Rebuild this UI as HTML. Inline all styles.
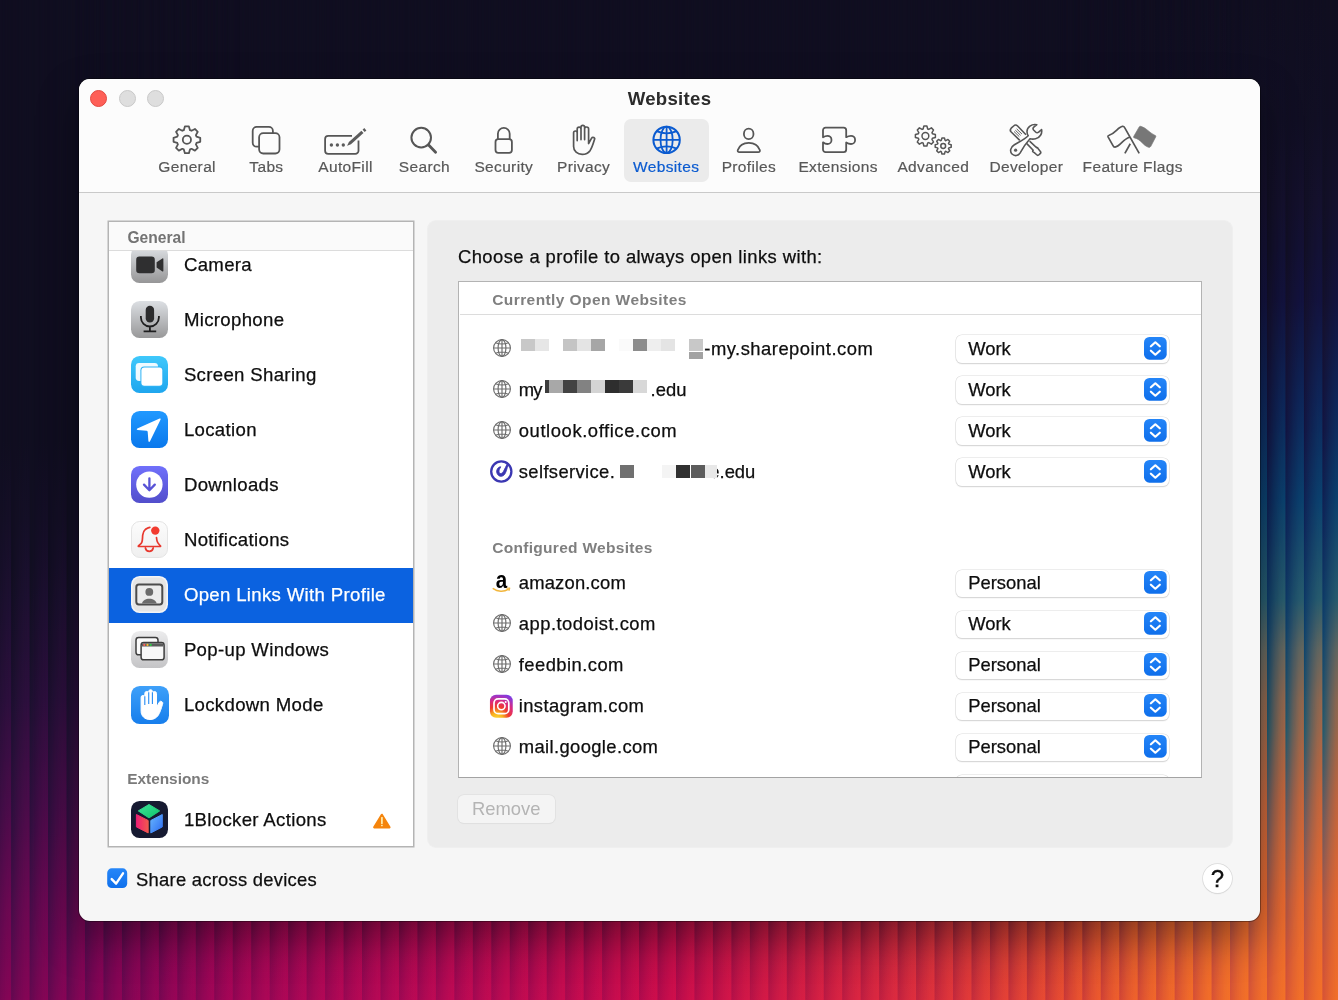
<!DOCTYPE html>
<html lang="en">
<head>
<meta charset="utf-8">
<title>Websites</title>
<style>
*{box-sizing:border-box;margin:0;padding:0}
html,body{width:1338px;height:1000px;overflow:hidden}
body{font-family:"Liberation Sans",sans-serif;color:#1d1d1f;position:relative;background:#100e20}
.abs{position:absolute}
/*WALL*/
#wall,#wallB,.wl{position:absolute;left:0;top:0;width:1338px;height:1000px;overflow:hidden}
#wa{position:absolute;left:0;top:0;width:1338px;height:1000px;background:linear-gradient(180deg,rgba(16,14,32,1) 0px,rgba(16,14,32,1) 560px,rgba(16,14,32,0.82) 700px,rgba(16,14,32,0.5) 800px,rgba(16,14,32,0.24) 870px,rgba(16,14,32,0.08) 930px,rgba(16,14,32,0) 1000px),linear-gradient(90deg,#8c0456 0px,#a80658 200px,#c00a54 450px,#d00e4c 670px,#de2a40 890px,#ea4c32 1050px,#f26a2a 1220px,#f47628 1338px)}
#wb{position:absolute;left:0;top:0;width:1338px;height:1000px;background:linear-gradient(180deg,rgba(16,14,32,1) 85px,rgba(16,14,32,1) 645px,rgba(16,14,32,0.82) 785px,rgba(16,14,32,0.5) 885px,rgba(16,14,32,0.24) 955px,rgba(16,14,32,0.08) 1015px,rgba(16,14,32,0) 1085px),linear-gradient(90deg,#800456 0px,#9c065a 200px,#b2085a 450px,#c40a52 670px,#d42244 890px,#e03c3c 1050px,#f05038 1220px,#f55a36 1338px)}
#la{position:absolute;left:0;top:0;width:340px;height:1000px;background:linear-gradient(180deg,#100e20 0px,#100e20 440px,#150f27 520px,#1e1032 600px,#2e0f3e 700px,#4a0c4a 800px,#6c0852 900px,#880556 1000px,#98055a 1130px);-webkit-mask-image:linear-gradient(90deg,#000 70px,rgba(0,0,0,0) 240px);mask-image:linear-gradient(90deg,#000 70px,rgba(0,0,0,0) 240px)}
#lb{position:absolute;left:0;top:0;width:340px;height:1000px;background:linear-gradient(180deg,#100e20 130px,#100e20 570px,#150f27 650px,#1e1032 730px,#2e0f3e 830px,#4a0c4a 930px,#6c0852 1030px,#880556 1130px,#98055a 1260px);-webkit-mask-image:linear-gradient(90deg,#000 70px,rgba(0,0,0,0) 240px);mask-image:linear-gradient(90deg,#000 70px,rgba(0,0,0,0) 240px)}
#ra{position:absolute;left:1060px;top:0;width:278px;height:1000px;background:linear-gradient(180deg,#100e20 0px,#110f24 120px,#15112e 200px,#131340 300px,#0e285c 400px,#0b4370 500px,#2a5e6e 600px,#6a695e 650px,#96694e 700px,#ca663a 800px,#ea6a2e 900px,#f47228 1000px,#f47628 1130px);-webkit-mask-image:linear-gradient(270deg,#000 90px,rgba(0,0,0,0) 278px);mask-image:linear-gradient(270deg,#000 90px,rgba(0,0,0,0) 278px)}
#rb{position:absolute;left:1060px;top:0;width:278px;height:1000px;background:linear-gradient(180deg,#100e20 0px,#110f24 250px,#15112e 330px,#131340 430px,#0e2559 530px,#0b3f6c 630px,#1b5970 730px,#6e5a5e 830px,#a85548 900px,#c8503c 960px,#d65237 1000px,#e05a34 1130px);-webkit-mask-image:linear-gradient(270deg,#000 90px,rgba(0,0,0,0) 278px);mask-image:linear-gradient(270deg,#000 90px,rgba(0,0,0,0) 278px)}
#wallB{-webkit-mask-image:linear-gradient(90deg,#000 0,rgba(0,0,0,.8) 14%,rgba(0,0,0,.45) 40%,rgba(0,0,0,.14) 72%,rgba(0,0,0,0) 100%);mask-image:linear-gradient(90deg,#000 0,rgba(0,0,0,.8) 14%,rgba(0,0,0,.45) 40%,rgba(0,0,0,.14) 72%,rgba(0,0,0,0) 100%);-webkit-mask-size:18.48px 100%;mask-size:18.48px 100%;-webkit-mask-repeat:repeat;mask-repeat:repeat;-webkit-mask-position:11.1px 0;mask-position:11.1px 0;}
/*ENDWALL*/
#win{position:absolute;left:79px;top:79px;width:1181px;height:842px;border-radius:11px;background:#f6f6f6;overflow:hidden;will-change:transform;
box-shadow:0 0 0 1px rgba(0,0,0,.35),0 18px 40px rgba(0,0,0,.35)}
#tbar{position:absolute;left:0;top:0;width:1181px;height:114px;background:#fcfcfc;border-bottom:1.4px solid #c9c9c9}
.tl{position:absolute;top:11px;width:17px;height:17px;border-radius:50%;border:1px solid #c8c8c8;background:#dedede}
#title{position:absolute;left:0;width:1181px;top:9px;text-align:center;font-weight:bold;font-size:18.6px;letter-spacing:.3px;color:#2b2b2b}
/*TB*/
.tl2{position:absolute;top:79px;width:120px;text-align:center;font-size:15.5px;line-height:18px;letter-spacing:.35px;color:#585858;white-space:nowrap;-webkit-text-stroke:.2px}.tl2.sel{color:#0b5bd0}
/*ENDTB*/
/*SB*/
#sbw{position:absolute;left:30px;top:143px;width:303.500px;height:623.700px;box-shadow:0 0 0 1.500px #b4b4b4;background:#fff}
#sb{position:absolute;left:0;top:0;width:100%;height:100%;overflow:hidden}
.shead{position:absolute;left:0;top:0;width:100%;height:29.300px;background:#fafafa;border-bottom:1px solid #dcdcdc;padding:6.600px 0 0 18.400px;font-weight:bold;font-size:15.600px;line-height:18px;color:#737373}
.shead2{position:absolute;left:18.200px;font-weight:bold;font-size:15.400px;line-height:18px;color:#7a7a7a}
.srow{position:absolute;left:0;width:100%;height:55px;font-size:18.600px;letter-spacing:.33px;color:#0e0e0e;-webkit-text-stroke:.25px;white-space:nowrap}
.srow.sel{background:#0b62e0;color:#fff}
.srow .ico{position:absolute;left:21.700px;top:7.900px}
.srow span{position:absolute;left:74.900px;top:16.300px;line-height:22px}
/*ENDSB*/
/*PN*/
#pnl{position:absolute;left:349px;top:141.500px;width:804px;height:626px;border-radius:8px;background:#ececec;box-shadow:0 0 0 1px #efefef}
.hd{font-size:18.400px;line-height:22px;letter-spacing:.42px;color:#0e0e0e;-webkit-text-stroke:.25px;white-space:nowrap}
#tbl{position:absolute;left:379px;top:202.500px;width:743px;height:496px;background:#fff}
#tblf{position:absolute;left:378.500px;top:202px;width:744px;height:497px;border:1.500px solid #b3b3b3;border-bottom-color:#a3a3a3;pointer-events:none}
.th{font-weight:bold;font-size:15.500px;line-height:18px;letter-spacing:.42px;color:#7f7f7f;white-space:nowrap}
.rt{position:absolute;font-size:18.400px;line-height:22px;letter-spacing:.48px;color:#0e0e0e;-webkit-text-stroke:.25px;white-space:nowrap}
.px{position:absolute;display:block}
.pop{position:absolute;left:876.900px;width:213px;height:27.900px;margin-top:1.100px;border-radius:6px;background:#fff;box-shadow:0 0 0 .6px #dcdcdc,0 1px 1.200px rgba(0,0,0,.2)}
.pop span{position:absolute;left:12.300px;top:2.500px;font-size:18.400px;line-height:22px;color:#0e0e0e;-webkit-text-stroke:.25px;white-space:nowrap}
#rm{position:absolute;left:378.500px;top:715.700px;width:97.500px;height:28.500px;border-radius:6px;background:#f4f4f4;box-shadow:0 0 0 .8px #e0e0e0,0 1px 1px rgba(0,0,0,.06);text-align:center;font-size:18.400px;line-height:22px;padding-top:3.600px;color:#b4b4b4}
.ft{font-size:18.400px;line-height:22px;letter-spacing:.25px;color:#0e0e0e;-webkit-text-stroke:.25px;white-space:nowrap}
#help{position:absolute;left:1123.800px;top:784.800px;width:29.400px;height:29.400px;border-radius:50%;background:#fff;box-shadow:0 0 0 .7px #d9d9d9,0 .8px 1.200px rgba(0,0,0,.16);text-align:center;font-size:24px;line-height:30.500px;color:#111;-webkit-text-stroke:.35px}
/*ENDPN*/
</style>
</head>
<body>
<!--WALL--><div id="wall"><div id="wa"></div><div id="la"></div><div id="ra"></div></div><div id="wallB"><div id="wb"></div><div id="lb"></div><div id="rb"></div></div><!--ENDWALL-->
<div id="win">
  <div id="tbar">
    <div class="tl" style="left:11.400px;background:#fe5f57;border-color:#e24840"></div>
    <div class="tl" style="left:39.700px"></div>
    <div class="tl" style="left:68px"></div>
    <div id="title">Websites</div>
    <!--TOOLBAR--><div class="abs" style="left:545px;top:39.5px;width:84.5px;height:63px;border-radius:7px;background:#ebebeb"></div><svg class="abs" style="left:0;top:0" width="1181" height="113" viewBox="79 79 1181 113" fill="none" stroke="#565656"><path d="M183.80 130.19 L184.90 126.45 L188.90 126.45 L190.00 130.19 A10.10 10.10 0 0 1 191.51 130.81 L194.93 128.95 L197.75 131.77 L195.89 135.19 A10.10 10.10 0 0 1 196.51 136.70 L200.25 137.80 L200.25 141.80 L196.51 142.90 A10.10 10.10 0 0 1 195.89 144.41 L197.75 147.83 L194.93 150.65 L191.51 148.79 A10.10 10.10 0 0 1 190.00 149.41 L188.90 153.15 L184.90 153.15 L183.80 149.41 A10.10 10.10 0 0 1 182.29 148.79 L178.87 150.65 L176.05 147.83 L177.91 144.41 A10.10 10.10 0 0 1 177.29 142.90 L173.55 141.80 L173.55 137.80 L177.29 136.70 A10.10 10.10 0 0 1 177.91 135.19 L176.05 131.77 L178.87 128.95 L182.29 130.81 A10.10 10.10 0 0 1 183.80 130.19 Z" stroke-width="1.8" stroke-linejoin="round"/><circle cx="186.9" cy="139.8" r="4.1" stroke-width="1.8"/><path d="M272.9 133.1V130.9a4 4 0 0 0-4-4H256.7a4 4 0 0 0-4 4V142.7a4 4 0 0 0 4 4H259.1" stroke-width="1.8"/><rect x="259.1" y="133.1" width="20.4" height="20.4" rx="4.2" stroke-width="1.8"/><path d="M352 135.9H328.3a3.2 3.2 0 0 0-3.2 3.2V150.7a3.2 3.2 0 0 0 3.2 3.2H355.3a3.2 3.2 0 0 0 3.2-3.2V140.4" stroke-width="1.8"/><circle cx="331.4" cy="145" r="1.7" fill="#5c5c5c" stroke="none"/><circle cx="337.4" cy="145" r="1.7" fill="#5c5c5c" stroke="none"/><circle cx="343.3" cy="145" r="1.7" fill="#5c5c5c" stroke="none"/><path d="M347.1 145.8L348.9 141.9L361.4 130.8L363.5 133.1L351 144.3Z" fill="#5c5c5c" stroke="none"/><path d="M362.6 129.7L364.3 128.1L366.4 130.4L364.7 132Z" fill="#5c5c5c" stroke="none"/><circle cx="421.2" cy="137.6" r="9.8" stroke-width="2"/><path d="M428.6 145L435.6 152.2" stroke-width="2.8" stroke-linecap="round"/><rect x="495.5" y="139.1" width="16.4" height="13.8" rx="2.8" stroke-width="1.8"/><path d="M497.9 139V133.8a5.9 5.9 0 0 1 11.8 0V139" stroke-width="1.8"/><path d="M 577.20 140.60 V 132.80 A 1.80 1.80 0 0 0 573.60 132.80 V 146.40 C 573.60 151.20 577.40 154.40 582.20 154.40 C 585.40 154.40 588.20 153.20 590.20 150.40 C 591.80 148.00 593.00 144.40 594.40 139.80 A 1.52 1.52 0 0 0 591.60 138.20 L 588.60 143.60 V 129.00 A 2.00 2.00 0 0 0 584.60 129.00 V 139.60 M 584.60 129.00 V 127.20 A 1.80 1.80 0 0 0 581.00 127.20 V 139.60 M 581.00 129.00 A 1.90 1.90 0 0 0 577.20 129.00 V 133.20" stroke-width="1.7" stroke-linecap="round" stroke-linejoin="round"/><g stroke="#0b5bd0"><circle cx="666.6" cy="139.9" r="13.2" stroke-width="2"/><ellipse cx="666.6" cy="139.9" rx="6.1" ry="13.2" stroke-width="1.8"/><path d="M666.6 126.7V153.1M653.4 139.9H679.8" stroke-width="1.8"/><path d="M656.5 131.2Q666.6 135.6 676.7 131.2M656.5 148.6Q666.6 144.2 676.7 148.6" stroke-width="1.8"/></g><ellipse cx="748.7" cy="133.9" rx="4.8" ry="5.2" stroke-width="1.8"/><path d="M739.4 152.1H758.2Q760.4 152.1 759.8 150C758.3 145.8 754 142.9 748.8 142.9C743.6 142.9 739.3 145.8 737.8 150Q737.2 152.1 739.4 152.1Z" stroke-width="1.8" stroke-linejoin="round"/><path d="M 823.00 137.20 V 130.20 A 2.60 2.60 0 0 1 825.60 127.60 H 843.60 A 2.60 2.60 0 0 1 846.20 130.20 V 137.20 C 847.60 136.32 849.20 135.80 851.00 135.80 A 4.08 4.08 0 0 1 851.00 144.00 C 849.20 144.00 847.60 143.40 846.20 142.48 V 149.60 A 2.60 2.60 0 0 1 843.60 152.20 H 825.60 A 2.60 2.60 0 0 1 823.00 149.60 V 142.28 C 824.40 143.40 826.00 144.00 827.40 144.00 A 4.08 4.08 0 0 0 827.40 135.80 C 826.00 135.80 824.40 136.32 823.00 137.20 Z" stroke-width="1.8" stroke-linejoin="round"/><path d="M923.10 128.97 L923.90 126.01 L926.90 126.01 L927.70 128.97 A7.40 7.40 0 0 1 928.75 129.40 L931.40 127.88 L933.52 130.00 L932.00 132.65 A7.40 7.40 0 0 1 932.43 133.70 L935.39 134.50 L935.39 137.50 L932.43 138.30 A7.40 7.40 0 0 1 932.00 139.35 L933.52 142.00 L931.40 144.12 L928.75 142.60 A7.40 7.40 0 0 1 927.70 143.03 L926.90 145.99 L923.90 145.99 L923.10 143.03 A7.40 7.40 0 0 1 922.05 142.60 L919.40 144.12 L917.28 142.00 L918.80 139.35 A7.40 7.40 0 0 1 918.37 138.30 L915.41 137.50 L915.41 134.50 L918.37 133.70 A7.40 7.40 0 0 1 918.80 132.65 L917.28 130.00 L919.40 127.88 L922.05 129.40 A7.40 7.40 0 0 1 923.10 128.97 Z" stroke-width="1.5" stroke-linejoin="round"/><circle cx="925.4" cy="136" r="3.4" stroke-width="1.5"/><path d="M941.30 140.41 L941.95 138.00 L944.45 138.00 L945.10 140.41 A5.90 5.90 0 0 1 945.81 140.71 L947.98 139.46 L949.74 141.22 L948.49 143.39 A5.90 5.90 0 0 1 948.79 144.10 L951.20 144.75 L951.20 147.25 L948.79 147.90 A5.90 5.90 0 0 1 948.49 148.61 L949.74 150.78 L947.98 152.54 L945.81 151.29 A5.90 5.90 0 0 1 945.10 151.59 L944.45 154.00 L941.95 154.00 L941.30 151.59 A5.90 5.90 0 0 1 940.59 151.29 L938.42 152.54 L936.66 150.78 L937.91 148.61 A5.90 5.90 0 0 1 937.61 147.90 L935.20 147.25 L935.20 144.75 L937.61 144.10 A5.90 5.90 0 0 1 937.91 143.39 L936.66 141.22 L938.42 139.46 L940.59 140.71 A5.90 5.90 0 0 1 941.30 140.41 Z" stroke-width="1.5" stroke-linejoin="round"/><circle cx="943.2" cy="146" r="2.4" stroke-width="1.5"/><path d="M 1036.80 124.72 C 1031.60 123.60 1027.00 127.20 1027.00 131.60 C 1027.00 133.20 1027.40 134.60 1028.20 135.80 C 1024.00 140.00 1018.00 142.40 1014.00 145.00 C 1010.40 147.20 1009.60 151.60 1012.00 154.00 C 1014.40 156.40 1018.40 156.00 1020.00 153.20 C 1022.80 148.00 1026.00 143.20 1030.00 138.80 C 1032.00 139.28 1034.00 139.20 1035.60 138.80 C 1040.00 137.60 1042.40 133.60 1041.60 129.60 L 1038.60 132.20 C 1037.60 133.00 1036.40 132.80 1035.60 132.00 L 1033.60 130.00 C 1032.80 129.00 1032.88 128.00 1033.80 127.20 L 1036.80 124.72 Z" stroke-width="1.6" stroke-linejoin="round"/><circle cx="1015.60" cy="150.20" r="1.6" fill="#5c5c5c" stroke="none"/><path d="M 1026.00 134.80 L 1017.60 126.00 Q 1015.60 124.00 1013.60 126.00 L 1011.20 128.20 Q 1009.40 130.00 1011.20 132.00 L 1019.80 140.40" stroke-width="1.6" stroke-linejoin="round"/><path d="M 1014.00 131.48 L 1019.32 136.68 M 1015.32 130.16 L 1020.64 135.36 M 1016.64 128.84 L 1021.96 134.04" stroke-width=".95"/><path d="M 1026.80 143.60 L 1033.20 150.20 C 1032.20 151.00 1032.60 152.00 1034.00 152.40 L 1037.00 155.00 Q 1038.00 155.80 1039.00 154.80 L 1040.40 153.40 Q 1041.20 152.40 1040.40 151.40 L 1038.00 148.60 C 1037.80 147.60 1037.20 147.20 1036.60 147.60 L 1029.60 141.20" stroke-width="1.6" stroke-linejoin="round"/><path d="M 1129.35 137.28 C 1123.08 139.08 1119.94 146.70 1115.00 147.15 Q 1113.43 147.15 1112.99 145.58 L 1108.05 136.83 Q 1107.61 135.71 1109.17 135.26 C 1115.45 133.25 1118.14 126.97 1122.40 126.30 Q 1123.97 126.07 1124.65 127.64 L 1139.22 153.43" stroke-width="1.7" stroke-linejoin="round"/><path d="M 1130.25 143.78 L 1124.87 153.43" stroke-width="1.7"/><path d="M 1140.79 126.30 Q 1139.67 125.85 1139.00 127.19 L 1133.61 136.61 Q 1133.17 137.73 1134.51 137.96 C 1140.57 139.08 1143.26 145.80 1148.64 147.37 Q 1150.21 147.60 1150.88 146.25 L 1155.81 136.83 Q 1156.26 135.71 1154.91 135.26 C 1149.09 132.80 1146.84 127.87 1140.79 126.30 Z" fill="#777" stroke="#777" stroke-width="0.6" stroke-linejoin="round"/></svg><div class="tl2" style="left:48.1px">General</div><div class="tl2" style="left:127.4px">Tabs</div><div class="tl2" style="left:206.5px">AutoFill</div><div class="tl2" style="left:285.4px">Search</div><div class="tl2" style="left:364.8px">Security</div><div class="tl2" style="left:444.6px">Privacy</div><div class="tl2 sel" style="left:527.2px">Websites</div><div class="tl2" style="left:609.9px">Profiles</div><div class="tl2" style="left:699.1px">Extensions</div><div class="tl2" style="left:794.3px">Advanced</div><div class="tl2" style="left:887.3px">Developer</div><div class="tl2" style="left:993.7px">Feature Flags</div><!--ENDTOOLBAR-->
  </div>
  <!--SIDEBAR--><div id="sbw"><div id="sb"><div class="srow" style="top:16.0px"><svg class="ico" width="37" height="37" viewBox="0 0 37 37"><defs><linearGradient id="gcam" x1="0" y1="0" x2="0" y2="1"><stop offset="0" stop-color="#dfe2e6"/><stop offset="1" stop-color="#969697"/></linearGradient></defs><rect width="37" height="37" rx="8.6" fill="url(#gcam)"/><rect x="5.2" y="10.6" width="18.6" height="16.6" rx="3.2" fill="#2f2f30"/><path d="M25.6 16.2L31.4 12.4Q32.4 11.9 32.4 13V24.8Q32.4 25.9 31.4 25.4L25.6 21.6Z" fill="#2f2f30"/></svg><span>Camera</span></div><div class="srow" style="top:71.0px"><svg class="ico" width="37" height="37" viewBox="0 0 37 37"><defs><linearGradient id="gmic" x1="0" y1="0" x2="0" y2="1"><stop offset="0" stop-color="#dcdfe3"/><stop offset="1" stop-color="#989899"/></linearGradient></defs><rect width="37" height="37" rx="8.6" fill="url(#gmic)"/><rect x="14.7" y="4.8" width="8.4" height="16.8" rx="4.2" fill="#2c2c2d"/><path d="M9.9 15V16.5A9 9 0 0 0 27.9 16.5V15M18.9 25.5V30M12.6 30.3H25.2" fill="none" stroke="#1e1e1f" stroke-width="1.8"/></svg><span>Microphone</span></div><div class="srow" style="top:126.0px"><svg class="ico" width="37" height="37" viewBox="0 0 37 37"><defs><linearGradient id="gss" x1="0" y1="0" x2="0" y2="1"><stop offset="0" stop-color="#3fc8fb"/><stop offset="1" stop-color="#1fa6ee"/></linearGradient></defs><rect width="37" height="37" rx="8.6" fill="url(#gss)"/><rect x="4.7" y="6.9" width="22.3" height="18" rx="3.4" fill="#fff" fill-opacity=".92"/><rect x="9.4" y="10.6" width="22.9" height="20.2" rx="3.8" fill="#2fb3f5"/><rect x="10.4" y="11.6" width="20.9" height="18.2" rx="3" fill="#fff"/></svg><span>Screen Sharing</span></div><div class="srow" style="top:181.0px"><svg class="ico" width="37" height="37" viewBox="0 0 37 37"><defs><linearGradient id="gloc" x1="0" y1="0" x2="0" y2="1"><stop offset="0" stop-color="#2199ff"/><stop offset="1" stop-color="#0a78ec"/></linearGradient></defs><rect width="37" height="37" rx="8.6" fill="url(#gloc)"/><path d="M28.6 7.5L6.3 17.4Q4.9 18.3 6.5 18.9L15.6 19.7Q16.6 19.8 16.7 20.9L17.4 30Q17.9 31.8 19 30.2L29.6 8.6Q30.1 7 28.6 7.5Z" fill="#fff"/></svg><span>Location</span></div><div class="srow" style="top:236.0px"><svg class="ico" width="37" height="37" viewBox="0 0 37 37"><defs><linearGradient id="gdl" x1="0" y1="0" x2="0" y2="1"><stop offset="0" stop-color="#7070fb"/><stop offset="1" stop-color="#524ecb"/></linearGradient></defs><rect width="37" height="37" rx="8.6" fill="url(#gdl)"/><circle cx="18.4" cy="18.6" r="13.2" fill="#fff"/><path d="M18.4 12.3V23.6M13 18.6L18.4 24.2L23.8 18.6" fill="none" stroke="#5853d6" stroke-width="2.3" stroke-linecap="round" stroke-linejoin="round"/></svg><span>Downloads</span></div><div class="srow" style="top:291.0px"><svg class="ico" width="37" height="37" viewBox="0 0 37 37"><defs><linearGradient id="gnt" x1="0" y1="0" x2="0" y2="1"><stop offset="0" stop-color="#fcfcfc"/><stop offset="1" stop-color="#efefef"/></linearGradient></defs><rect x=".5" y=".5" width="36" height="36" rx="8.3" fill="url(#gnt)" stroke="#e4e4e4"/><path d="M18.9 6.3C16.6 6.6 15.8 7.6 14.4 8.4C12.6 9.9 11.9 11.9 11.7 14.1C11.4 17.4 11.6 19.8 10.8 21.3C10.1 22.8 8.6 23.6 7.5 24.9Q7 25.5 8 25.5H28.8Q29.9 25.5 29.4 24.9C28.2 23.5 26.6 22.3 26.1 20.1C25.8 18.9 25.6 17.8 25.5 16.5M14.4 27C14.8 29 16.3 30.3 18.3 30.3C20.3 30.3 21.8 29 22.2 27" fill="none" stroke="#e8382e" stroke-width="1.7" stroke-linecap="round" stroke-linejoin="round"/><circle cx="24.3" cy="9.6" r="4.2" fill="#f23b2f"/></svg><span>Notifications</span></div><div class="srow sel" style="top:346.0px"><svg class="ico" width="37" height="37" viewBox="0 0 37 37"><rect width="37" height="37" rx="8.6" fill="#f3f4f6"/><rect x="1.6" y="1.6" width="33.8" height="33.8" rx="7.4" fill="#e5e5e5"/><rect x="5.3" y="8.6" width="26" height="19.8" rx="2.6" fill="#ececec" stroke="#4c4c4c" stroke-width="2"/><circle cx="18.3" cy="15.9" r="3.9" fill="#6b6b6b"/><path d="M10.9 27.6C11.6 24.6 14.6 22.8 18.3 22.8C22 22.8 25 24.6 25.7 27.6Z" fill="#6b6b6b"/></svg><span>Open Links With Profile</span></div><div class="srow" style="top:401.0px"><svg class="ico" width="37" height="37" viewBox="0 0 37 37"><defs><linearGradient id="gpw" x1="0" y1="0" x2="0" y2="1"><stop offset="0" stop-color="#ececed"/><stop offset="1" stop-color="#c4c4c6"/></linearGradient></defs><rect width="37" height="37" rx="8.6" fill="url(#gpw)"/><rect x="5" y="6.6" width="22" height="17.2" rx="2.6" fill="#fbfbfb" stroke="#3e3e3e" stroke-width="1.5"/><rect x="10.1" y="11.6" width="23" height="17.2" rx="2.6" fill="#f7f7f7" stroke="#3e3e3e" stroke-width="1.5"/><path d="M10.8 15.5V14.2A1.9 1.9 0 0 1 12.700 12.3H30.500A1.900 1.900 0 0 1 32.400 14.200V15.500Z" fill="#5b5b5b"/><circle cx="13.3" cy="13.9" r="1.1" fill="#ff6058"/><circle cx="16.5" cy="13.9" r="1.1" fill="#ffc130"/><circle cx="19.7" cy="13.9" r="1.1" fill="#2aca44"/></svg><span>Pop-up Windows</span></div><div class="srow" style="top:456.0px"><svg class="ico" style="left:21.900px;margin-top:-.1px" width="38" height="38" viewBox="0 0 38 38"><defs><linearGradient id="glk" x1="0" y1="0" x2="0" y2="1"><stop offset="0" stop-color="#3ea0f9"/><stop offset="1" stop-color="#177eec"/></linearGradient></defs><rect width="38" height="38" rx="8.8" fill="url(#glk)"/><path d="M 10.10 25.30 V 11.31 A 1.85 1.85 0 0 1 13.80 11.31 V 7.40 A 1.95 1.95 0 0 1 17.71 7.40 V 5.55 A 1.85 1.85 0 0 1 21.42 5.55 V 7.40 A 2.06 2.06 0 0 1 25.53 7.40 V 21.19 L 28.21 16.25 A 1.73 1.73 0 0 1 31.50 18.31 C 30.06 23.25 28.82 26.95 27.18 29.42 C 25.12 32.30 22.24 33.54 18.95 33.54 C 14.01 33.54 10.10 30.24 10.10 25.30 Z" fill="#fff" stroke="#fff" stroke-width="1" stroke-linejoin="round"/><path d="M 13.80 10.16 V 18.93 M 17.71 6.21 V 17.90 M 21.42 6.21 V 17.90" stroke="#2f90f4" stroke-width="1.150" stroke-linecap="butt" fill="none"/></svg><span>Lockdown Mode</span></div><div class="shead2" style="top:547.5px">Extensions</div><div class="srow" style="top:571.0px"><svg class="ico" width="37" height="37" viewBox="0 0 37 37"><defs><linearGradient id="b1" x1="0" y1="0" x2="1" y2="1"><stop offset="0" stop-color="#3ee39a"/><stop offset="1" stop-color="#0fc368"/></linearGradient><linearGradient id="b2" x1="0" y1="0" x2="1" y2="0"><stop offset="0" stop-color="#ee1f74"/><stop offset="1" stop-color="#f2584e"/></linearGradient><linearGradient id="b3" x1="0" y1="0" x2="1" y2="1"><stop offset="0" stop-color="#66b6ff"/><stop offset="1" stop-color="#2f6cf0"/></linearGradient></defs><rect width="37" height="37" rx="8.6" fill="#161a31"/><path d="M18.00 3.48 L28.67 9.90 L18.00 16.92 L7.32 9.90 Z" fill="url(#b1)" stroke="url(#b1)" stroke-width="1" stroke-linejoin="round"/><path d="M5.40 13.50 L17.16 19.50 L17.16 31.91 L5.40 25.91 Z" fill="url(#b2)" stroke="url(#b2)" stroke-width="1" stroke-linejoin="round"/><path d="M19.80 19.50 L31.31 13.50 L31.31 25.91 L19.80 31.91 Z" fill="url(#b3)" stroke="url(#b3)" stroke-width="1" stroke-linejoin="round"/></svg><span>1Blocker Actions</span><svg class="abs" style="left:262px;top:18px" width="22" height="20" viewBox="372 810 22 20"><path d="M382.850 813.800L390.500 826.300H375.200Z" fill="#f5840c" stroke="#f5840c" stroke-width="2.200" stroke-linejoin="round"/><rect x="382.050" y="815.900" width="1.700" height="7" rx=".5" fill="#ffeeb0"/><rect x="382.050" y="823.700" width="1.700" height="1.500" rx=".4" fill="#ffeeb0"/></svg></div><div class="shead">General</div></div></div><!--ENDSIDEBAR-->
  <!--PANEL--><div id="pnl"></div><div class="abs hd" style="left:379px;top:166.8px">Choose a profile to always open links with:</div><div id="tbl"></div><div class="abs th" style="left:413.2px;top:212.3px">Currently Open Websites</div><div class="abs" style="left:380.5px;top:235px;width:741px;height:1px;background:#dcdcdc"></div><svg class="abs" style="left:413.10px;top:259.00px" width="20" height="20" viewBox="-10 -10 20 20" fill="none" stroke="#6c6c6c" stroke-width="1.15"><circle r="8.4"/><ellipse rx="3.9" ry="8.4"/><path d="M0-8.400V8.400M-8.400 0H8.400M-6.500-5.300Q0-2.700 6.500-5.300M-6.500 5.300Q0 2.700 6.500 5.300"/></svg><i class="px" style="left:442.0px;top:260.3px;width:14.0px;height:12.2px;background:#c8c8c8"></i><i class="px" style="left:456.0px;top:260.3px;width:14.0px;height:12.2px;background:#e6e6e6"></i><i class="px" style="left:484.0px;top:260.3px;width:14.0px;height:12.2px;background:#c4c4c4"></i><i class="px" style="left:498.0px;top:260.3px;width:14.0px;height:12.2px;background:#e4e4e4"></i><i class="px" style="left:512.0px;top:260.3px;width:14.0px;height:12.2px;background:#a6a6a6"></i><i class="px" style="left:540.0px;top:260.3px;width:14.0px;height:12.2px;background:#fafafa"></i><i class="px" style="left:554.0px;top:260.3px;width:14.0px;height:12.2px;background:#8c8c8c"></i><i class="px" style="left:568.0px;top:260.3px;width:14.0px;height:12.2px;background:#eeeeee"></i><i class="px" style="left:582.0px;top:260.3px;width:14.0px;height:12.2px;background:#e4e4e4"></i><i class="px" style="left:610.0px;top:260.3px;width:14.0px;height:12.2px;background:#c8c8c8"></i><i class="px" style="left:610.0px;top:272.5px;width:14.0px;height:7.9px;background:#a2a2a2"></i><div class="rt" style="left:625.3px;top:259.0px;letter-spacing:.49px">-my.sharepoint.com</div><div class="pop" style="top:255.2px"><span>Work</span><svg class="abs" style="left:188.300px;top:1.800px" width="24" height="24" viewBox="0 0 24 24"><defs><linearGradient id="sg348" x1="0" y1="0" x2="0" y2="1"><stop offset="0" stop-color="#2485f8"/><stop offset="1" stop-color="#0f6feb"/></linearGradient></defs><rect width="22.700" height="22.700" rx="5.400" fill="url(#sg348)"/><path d="M6.900 9.300L11.350 5.300L15.800 9.300M6.900 13.700L11.350 17.700L15.800 13.700" fill="none" stroke="#fff" stroke-width="2.200" stroke-linecap="round" stroke-linejoin="round"/></svg></div><svg class="abs" style="left:413.10px;top:300.00px" width="20" height="20" viewBox="-10 -10 20 20" fill="none" stroke="#6c6c6c" stroke-width="1.15"><circle r="8.4"/><ellipse rx="3.9" ry="8.4"/><path d="M0-8.400V8.400M-8.400 0H8.400M-6.500-5.300Q0-2.700 6.500-5.300M-6.500 5.300Q0 2.700 6.500 5.300"/></svg><div class="rt" style="left:439.8px;top:300.0px;letter-spacing:-.8px">my</div><i class="px" style="left:465.8px;top:301.3px;width:4.5px;height:13.0px;background:#3c3c3c"></i><i class="px" style="left:470.3px;top:301.3px;width:14.0px;height:13.0px;background:#a8a8a8"></i><i class="px" style="left:484.3px;top:301.3px;width:14.0px;height:13.0px;background:#424242"></i><i class="px" style="left:498.3px;top:301.3px;width:14.0px;height:13.0px;background:#828282"></i><i class="px" style="left:512.3px;top:301.3px;width:14.0px;height:13.0px;background:#d4d4d4"></i><i class="px" style="left:526.3px;top:301.3px;width:14.0px;height:13.0px;background:#2e2e2e"></i><i class="px" style="left:540.3px;top:301.3px;width:14.0px;height:13.0px;background:#3a3a3a"></i><i class="px" style="left:554.3px;top:301.3px;width:14.0px;height:13.0px;background:#d8d8d8"></i><div class="rt" style="left:571.6px;top:300.0px;letter-spacing:0">.edu</div><div class="pop" style="top:296.2px"><span>Work</span><svg class="abs" style="left:188.300px;top:1.800px" width="24" height="24" viewBox="0 0 24 24"><defs><linearGradient id="sg389" x1="0" y1="0" x2="0" y2="1"><stop offset="0" stop-color="#2485f8"/><stop offset="1" stop-color="#0f6feb"/></linearGradient></defs><rect width="22.700" height="22.700" rx="5.400" fill="url(#sg389)"/><path d="M6.900 9.300L11.350 5.300L15.800 9.300M6.900 13.700L11.350 17.700L15.800 13.700" fill="none" stroke="#fff" stroke-width="2.200" stroke-linecap="round" stroke-linejoin="round"/></svg></div><svg class="abs" style="left:413.10px;top:340.90px" width="20" height="20" viewBox="-10 -10 20 20" fill="none" stroke="#6c6c6c" stroke-width="1.15"><circle r="8.4"/><ellipse rx="3.9" ry="8.4"/><path d="M0-8.400V8.400M-8.400 0H8.400M-6.500-5.300Q0-2.700 6.500-5.300M-6.500 5.300Q0 2.700 6.500 5.300"/></svg><div class="rt" style="left:439.8px;top:341.0px;letter-spacing:.58px">outlook.office.com</div><div class="pop" style="top:337.2px"><span>Work</span><svg class="abs" style="left:188.300px;top:1.800px" width="24" height="24" viewBox="0 0 24 24"><defs><linearGradient id="sg430" x1="0" y1="0" x2="0" y2="1"><stop offset="0" stop-color="#2485f8"/><stop offset="1" stop-color="#0f6feb"/></linearGradient></defs><rect width="22.700" height="22.700" rx="5.400" fill="url(#sg430)"/><path d="M6.900 9.300L11.350 5.300L15.800 9.300M6.900 13.700L11.350 17.700L15.800 13.700" fill="none" stroke="#fff" stroke-width="2.200" stroke-linecap="round" stroke-linejoin="round"/></svg></div><svg class="abs" style="left:410px;top:380px" width="25" height="25" viewBox="489 459 25 25"><circle cx="501.3" cy="471.5" r="10.100" fill="none" stroke="#3b37b2" stroke-width="2.300"/><path d="M 507.95 464.45 C 507.20 468.50 506.00 472.40 504.50 474.50 C 503.00 476.45 500.30 476.90 498.50 475.40 C 496.40 473.60 496.10 470.60 497.60 468.50 C 498.50 467.30 499.70 466.85 500.75 466.85 L 500.00 468.20 C 498.80 470.00 498.50 472.10 499.70 473.30 C 500.90 474.20 502.70 473.00 503.60 471.20 C 504.80 468.80 506.00 466.40 507.05 464.30 Z" fill="#3b37b2" stroke="#3b37b2" stroke-width=".900" stroke-linejoin="round"/></svg><div class="rt" style="left:439.8px;top:382.0px;letter-spacing:.36px">selfservice.</div><div class="rt" style="left:630.3px;top:382.0px;letter-spacing:0">e.edu</div><i class="px" style="left:540.5px;top:386.3px;width:14.0px;height:13.0px;background:#707070"></i><i class="px" style="left:583.0px;top:386.3px;width:14.3px;height:13.0px;background:#f4f4f4"></i><i class="px" style="left:597.3px;top:386.3px;width:14.2px;height:13.0px;background:#303030"></i><i class="px" style="left:611.5px;top:386.3px;width:14.2px;height:13.0px;background:#5c5c5c"></i><i class="px" style="left:625.7px;top:386.3px;width:12.8px;height:13.0px;background:#e8e8e8"></i><div class="pop" style="top:378.2px"><span>Work</span><svg class="abs" style="left:188.300px;top:1.800px" width="24" height="24" viewBox="0 0 24 24"><defs><linearGradient id="sg471" x1="0" y1="0" x2="0" y2="1"><stop offset="0" stop-color="#2485f8"/><stop offset="1" stop-color="#0f6feb"/></linearGradient></defs><rect width="22.700" height="22.700" rx="5.400" fill="url(#sg471)"/><path d="M6.900 9.300L11.350 5.300L15.800 9.300M6.900 13.700L11.350 17.700L15.800 13.700" fill="none" stroke="#fff" stroke-width="2.200" stroke-linecap="round" stroke-linejoin="round"/></svg></div><div class="abs th" style="left:413.2px;top:460.4px;letter-spacing:.3px">Configured Websites</div><svg class="abs" style="left:411px;top:489px" width="24" height="28" viewBox="490 568 24 28"><text x="501.5" y="587.6" text-anchor="middle" font-family="Liberation Sans,sans-serif" font-weight="bold" font-size="24.500" fill="#000" transform="translate(501.5 0) scale(.84 1) translate(-501.5 0)">a</text><path d="M493.200 588.600C497.500 591.800 504 592 508.200 589.300" fill="none" stroke="#f2b63c" stroke-width="1.500" stroke-linecap="round"/><path d="M507 588.200L509.800 588.100L509 590.500" fill="none" stroke="#f2b63c" stroke-width="1.100" stroke-linecap="round" stroke-linejoin="round"/></svg><div class="rt" style="left:439.8px;top:493.3px;letter-spacing:0.18px">amazon.com</div><div class="pop" style="top:489.5px"><span>Personal</span><svg class="abs" style="left:188.300px;top:1.800px" width="24" height="24" viewBox="0 0 24 24"><defs><linearGradient id="sg583" x1="0" y1="0" x2="0" y2="1"><stop offset="0" stop-color="#2485f8"/><stop offset="1" stop-color="#0f6feb"/></linearGradient></defs><rect width="22.700" height="22.700" rx="5.400" fill="url(#sg583)"/><path d="M6.900 9.300L11.350 5.300L15.800 9.300M6.900 13.700L11.350 17.700L15.800 13.700" fill="none" stroke="#fff" stroke-width="2.200" stroke-linecap="round" stroke-linejoin="round"/></svg></div><svg class="abs" style="left:413.10px;top:534.30px" width="20" height="20" viewBox="-10 -10 20 20" fill="none" stroke="#6c6c6c" stroke-width="1.15"><circle r="8.4"/><ellipse rx="3.9" ry="8.4"/><path d="M0-8.400V8.400M-8.400 0H8.400M-6.500-5.300Q0-2.700 6.500-5.300M-6.500 5.300Q0 2.700 6.500 5.300"/></svg><div class="rt" style="left:439.8px;top:534.3px;letter-spacing:0.48px">app.todoist.com</div><div class="pop" style="top:530.5px"><span>Work</span><svg class="abs" style="left:188.300px;top:1.800px" width="24" height="24" viewBox="0 0 24 24"><defs><linearGradient id="sg624" x1="0" y1="0" x2="0" y2="1"><stop offset="0" stop-color="#2485f8"/><stop offset="1" stop-color="#0f6feb"/></linearGradient></defs><rect width="22.700" height="22.700" rx="5.400" fill="url(#sg624)"/><path d="M6.900 9.300L11.350 5.300L15.800 9.300M6.900 13.700L11.350 17.700L15.800 13.700" fill="none" stroke="#fff" stroke-width="2.200" stroke-linecap="round" stroke-linejoin="round"/></svg></div><svg class="abs" style="left:413.10px;top:575.30px" width="20" height="20" viewBox="-10 -10 20 20" fill="none" stroke="#6c6c6c" stroke-width="1.15"><circle r="8.4"/><ellipse rx="3.9" ry="8.4"/><path d="M0-8.400V8.400M-8.400 0H8.400M-6.500-5.300Q0-2.700 6.500-5.300M-6.500 5.300Q0 2.700 6.500 5.300"/></svg><div class="rt" style="left:439.8px;top:575.3px;letter-spacing:0.44px">feedbin.com</div><div class="pop" style="top:571.5px"><span>Personal</span><svg class="abs" style="left:188.300px;top:1.800px" width="24" height="24" viewBox="0 0 24 24"><defs><linearGradient id="sg665" x1="0" y1="0" x2="0" y2="1"><stop offset="0" stop-color="#2485f8"/><stop offset="1" stop-color="#0f6feb"/></linearGradient></defs><rect width="22.700" height="22.700" rx="5.400" fill="url(#sg665)"/><path d="M6.900 9.300L11.350 5.300L15.800 9.300M6.900 13.700L11.350 17.700L15.800 13.700" fill="none" stroke="#fff" stroke-width="2.200" stroke-linecap="round" stroke-linejoin="round"/></svg></div><svg class="abs" style="left:410px;top:615px" width="25" height="25" viewBox="489 694 25 25"><defs><radialGradient id="ig" cx="0.3" cy="1.05" r="1.2"><stop offset="0" stop-color="#fdd835"/><stop offset=".22" stop-color="#f9b31f"/><stop offset=".45" stop-color="#ee3b2f"/><stop offset=".65" stop-color="#dd2a7b"/><stop offset=".85" stop-color="#9b36c9"/><stop offset="1" stop-color="#6a3df0"/></radialGradient></defs><rect x="489.950" y="694.800" width="22.800" height="23" rx="6.200" fill="url(#ig)"/><rect x="494" y="698.800" width="14.800" height="14.800" rx="4.200" fill="none" stroke="#fff" stroke-width="1.700"/><circle cx="501.350" cy="706.100" r="3.700" fill="none" stroke="#fff" stroke-width="1.600"/><circle cx="505.700" cy="701.900" r="1" fill="#fff"/></svg><div class="rt" style="left:439.8px;top:616.3px;letter-spacing:0.37px">instagram.com</div><div class="pop" style="top:612.5px"><span>Personal</span><svg class="abs" style="left:188.300px;top:1.800px" width="24" height="24" viewBox="0 0 24 24"><defs><linearGradient id="sg706" x1="0" y1="0" x2="0" y2="1"><stop offset="0" stop-color="#2485f8"/><stop offset="1" stop-color="#0f6feb"/></linearGradient></defs><rect width="22.700" height="22.700" rx="5.400" fill="url(#sg706)"/><path d="M6.900 9.300L11.350 5.300L15.800 9.300M6.900 13.700L11.350 17.700L15.800 13.700" fill="none" stroke="#fff" stroke-width="2.200" stroke-linecap="round" stroke-linejoin="round"/></svg></div><svg class="abs" style="left:413.10px;top:657.30px" width="20" height="20" viewBox="-10 -10 20 20" fill="none" stroke="#6c6c6c" stroke-width="1.15"><circle r="8.4"/><ellipse rx="3.9" ry="8.4"/><path d="M0-8.400V8.400M-8.400 0H8.400M-6.500-5.300Q0-2.700 6.500-5.300M-6.500 5.300Q0 2.700 6.500 5.300"/></svg><div class="rt" style="left:439.8px;top:657.3px;letter-spacing:0.37px">mail.google.com</div><div class="pop" style="top:653.5px"><span>Personal</span><svg class="abs" style="left:188.300px;top:1.800px" width="24" height="24" viewBox="0 0 24 24"><defs><linearGradient id="sg747" x1="0" y1="0" x2="0" y2="1"><stop offset="0" stop-color="#2485f8"/><stop offset="1" stop-color="#0f6feb"/></linearGradient></defs><rect width="22.700" height="22.700" rx="5.400" fill="url(#sg747)"/><path d="M6.900 9.300L11.350 5.300L15.800 9.300M6.900 13.700L11.350 17.700L15.800 13.700" fill="none" stroke="#fff" stroke-width="2.200" stroke-linecap="round" stroke-linejoin="round"/></svg></div><div class="abs" style="left:876.6px;top:694.6px;width:214px;height:3.400px;overflow:hidden"><div class="pop" style="left:0;top:0"></div></div><div id="tblf"></div><div id="rm">Remove</div><svg class="abs" style="left:28px;top:789px" width="21" height="21" viewBox="107 868 21 21"><defs><linearGradient id="cbg" x1="0" y1="0" x2="0" y2="1"><stop offset="0" stop-color="#2686f8"/><stop offset="1" stop-color="#0f70ec"/></linearGradient></defs><rect x="107.200" y="868.300" width="20" height="19.800" rx="4.600" fill="url(#cbg)"/><path d="M111.700 879.100L116.100 883.700L123 873.300" fill="none" stroke="#fff" stroke-width="2.400" stroke-linecap="round" stroke-linejoin="round"/></svg><div class="abs ft" style="left:57.1px;top:790.3px">Share across devices</div><div id="help">?</div><!--ENDPANEL-->
  <!--FOOTER-->
</div>
</body>
</html>
